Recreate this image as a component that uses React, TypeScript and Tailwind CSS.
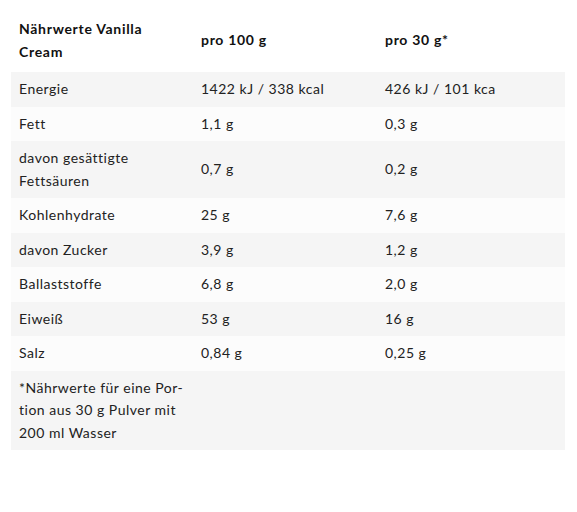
import React from "react";

const rows: [React.ReactNode, string, string][] = [
  ["Energie", "1422 kJ / 338 kcal", "426 kJ / 101 kca"],
  ["Fett", "1,1 g", "0,3 g"],
  [
    <>
      davon gesättigte
      <br />
      Fettsäuren
    </>,
    "0,7 g",
    "0,2 g",
  ],
  ["Kohlenhydrate", "25 g", "7,6 g"],
  ["davon Zucker", "3,9 g", "1,2 g"],
  ["Ballaststoffe", "6,8 g", "2,0 g"],
  ["Eiweiß", "53 g", "16 g"],
  ["Salz", "0,84 g", "0,25 g"],
  [
    <>
      *Nährwerte für eine Por-
      <br />
      tion aus 30 g Pulver mit
      <br />
      200 ml Wasser
    </>,
    "",
    "",
  ],
];

export default function App() {
  return (
    <div className="min-h-screen bg-white pt-[9px] px-[11px] font-['Lato',sans-serif] text-[14px] leading-[22.5px] tracking-[0.5px] text-[#222]">
      <table className="w-[554px] table-fixed border-collapse">
        <thead>
          <tr className="font-bold text-[#111] tracking-[0.7px]">
            <th className="w-[182px] px-2 py-[9px] text-left align-middle">
              Nährwerte Vanilla
              <br />
              Cream
            </th>
            <th className="w-[184px] px-2 py-[9px] text-left align-middle">
              pro 100 g
            </th>
            <th className="px-2 py-[9px] text-left align-middle">pro 30 g*</th>
          </tr>
        </thead>
        <tbody>
          {rows.map(([label, a, b], idx) => (
            <tr key={idx} className={idx % 2 === 0 ? "bg-[#f5f5f5]" : "bg-[#fcfcfc]"}>
              <td className="px-2 py-[6px] align-middle">{label}</td>
              <td className="px-2 py-[6px] align-middle">{a}</td>
              <td className="px-2 py-[6px] align-middle">{b}</td>
            </tr>
          ))}
        </tbody>
      </table>
    </div>
  );
}
